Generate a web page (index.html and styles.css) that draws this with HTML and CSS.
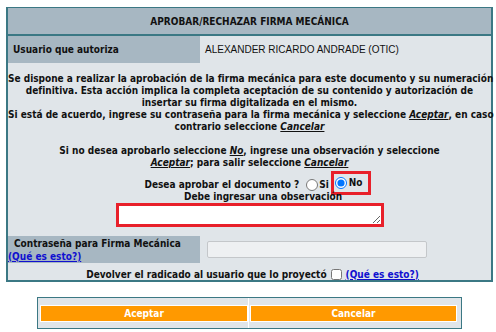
FILE: index.html
```html
<!DOCTYPE html>
<html lang="es">
<head>
    <meta charset="UTF-8">
    <title>Aprobar/Rechazar Firma Mecánica</title>
    <link rel="stylesheet" href="styles.css">
</head>
<body>
    <div class="panel">
        <div class="panel-title">APROBAR/RECHAZAR FIRMA MECÁNICA</div>
        <div class="row">
            <div class="row-label">Usuario que autoriza</div>
            <div class="row-value">ALEXANDER RICARDO ANDRADE (OTIC)</div>
        </div>
        <div class="info">
            <p>Se dispone a realizar la aprobación de la firma mecánica para este documento y su numeración<br>
            definitiva. Esta acción implica la completa aceptación de su contenido y autorización de<br>
            insertar su firma digitalizada en el mismo.<br>
            Si está de acuerdo, ingrese su contraseña para la firma mecánica y seleccione <em>Aceptar</em>, en caso<br>
            contrario seleccione <em>Cancelar</em></p>
            <p>Si no desea aprobarlo seleccione <em>No</em>, ingrese una observación y seleccione<br>
            <em>Aceptar</em>; para salir seleccione <em>Cancelar</em></p>
        </div>
        <div class="decision">
            <div class="question">
                Desea aprobar el documento ?
                <label class="opt"><input type="radio" name="aprobar">Si</label>
                <label class="opt opt-marked"><input type="radio" name="aprobar" checked>No</label>
            </div>
            <div class="hint">Debe ingresar una observación</div>
            <textarea class="obs"></textarea>
        </div>
        <div class="row row-pass">
            <div class="row-label">
                <span class="pass-title">Contraseña para Firma Mecánica</span>
                <a href="#" class="help">(Qué es esto?)</a>
            </div>
            <div class="row-field"><input type="password" class="pass"></div>
        </div>
        <div class="return">
            Devolver el radicado al usuario que lo proyectó
            <input type="checkbox" class="chk">
            <a href="#" class="help">(Qué es esto?)</a>
        </div>
    </div>

    <div class="actions">
        <div class="action-cell"><button class="btn">Aceptar</button></div>
        <div class="action-cell"><button class="btn">Cancelar</button></div>
    </div>
</body>
</html>
```

FILE: styles.css
```css
body {
    margin: 0;
    background: #fff;
    font-family: "DejaVu Sans Condensed", "DejaVu Sans", sans-serif;
    font-size: 10px;
    font-weight: bold;
    color: #111;
}
.panel {
    width: 483px;
    margin: 7px 0 0 6px;
    border: 2px solid #3b7884;
    border-top-width: 1px;
    background: #e0e5e9;
}
.panel-title {
    height: 26px;
    line-height: 27px;
    text-align: center;
    background: #a7b7c2;
    border-bottom: 2px solid #3b7884;
}
.row {
    display: flex;
    height: 27px;
}
.row-label {
    width: 192px;
    background: #a7b7c2;
    padding-left: 5px;
    box-sizing: border-box;
    display: flex;
    align-items: center;
}
.row-value {
    flex: 1;
    display: flex;
    align-items: center;
    padding-left: 5px;
    font-family: "Liberation Sans", Arial, sans-serif;
    font-weight: normal;
    font-size: 10px;
}
.info {
    text-align: center;
    white-space: nowrap;
    line-height: 12px;
    padding-top: 10px;
}
.info p {
    margin: 0 0 12px;
}
.info p:last-child {
    margin-bottom: 10px;
}
.info em {
    text-decoration: underline;
}
.decision {
    display: flex;
    flex-direction: column;
    align-items: center;
    line-height: 12px;
}
.question {
    display: flex;
    align-items: center;
    height: 12px;
    padding-left: 16px;
}
.opt {
    display: flex;
    align-items: center;
}
.opt input {
    margin: 0 1px 0 7px;
    width: 12px;
    height: 12px;
}
.opt-marked {
    border: 3px solid #e8202a;
    padding: 3px 5px 3px 1px;
    margin: -2px 0 2px 2px;
}
.opt-marked input {
    margin-left: 0;
    margin-right: 2px;
}
.hint {
    padding-left: 27px;
}
.obs {
    width: 268px;
    height: 24px;
    box-sizing: border-box;
    border: 3px solid #e8202a;
    margin: 0;
    resize: both;
}
.row-pass {
    margin-top: 9px;
    height: 27px;
}
.row-pass .row-label {
    flex-direction: column;
    align-items: flex-start;
    justify-content: center;
    padding-left: 0;
    line-height: 13px;
}
.pass-title {
    padding-left: 6px;
}
.help {
    color: #1010d0;
    font-weight: bold;
}
.row-field {
    flex: 1;
    display: flex;
    align-items: center;
    padding-left: 7px;
}
.pass {
    width: 220px;
    height: 17px;
    box-sizing: border-box;
    border: 1px solid #c4c7ca;
    border-radius: 2px;
    background: #eef0f2;
}
.return {
    display: flex;
    align-items: center;
    justify-content: center;
    box-sizing: border-box;
    height: 17px;
    padding: 5px 0 0 6px;
}
.chk {
    width: 11px;
    height: 11px;
    margin: 0 4px;
}
.actions {
    display: flex;
    width: 418px;
    margin: 15px 0 0 37px;
    border: 1px solid #3b7884;
    background: #e0e5e9;
    padding: 0 3px 0 2px;
}
.action-cell {
    width: 208px;
    padding: 7px 0 6px;
}
.action-cell + .action-cell {
    width: 207px;
    border-left: 1px solid #fff;
    padding-left: 1px;
}
.btn {
    display: block;
    width: 100%;
    height: 17px;
    background: #ff9900;
    border: 1px solid #fff;
    color: #fff;
    font-family: "DejaVu Sans Condensed", "DejaVu Sans", sans-serif;
    font-size: 10px;
    font-weight: bold;
    cursor: pointer;
}
```
